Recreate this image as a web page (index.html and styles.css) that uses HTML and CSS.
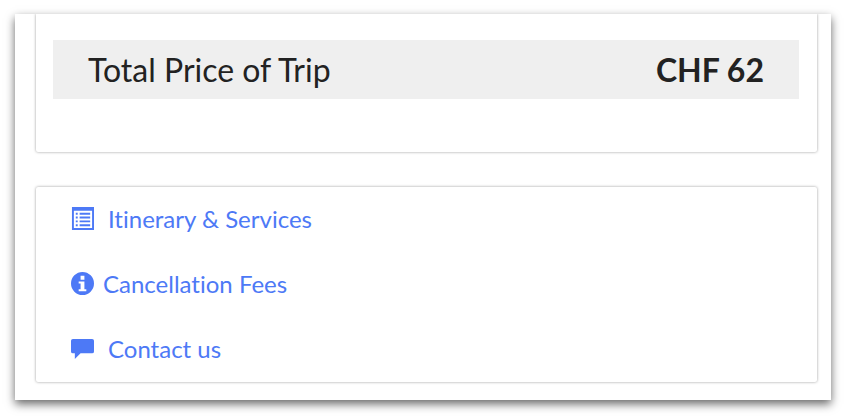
FILE: index.html
```
<!doctype html>
<html lang="en">
  <head>
    <meta charset="UTF-8" />
    <meta name="viewport" content="width=device-width, initial-scale=1.0" />
    <title>Trip Summary</title>
    <link rel="stylesheet" href="styles.css">
  </head>
  <body>
    <main class="panel">
      <section class="card price-card">
        <div class="total">
          <span>Total Price of Trip</span>
          <strong>CHF 62</strong>
        </div>
      </section>

      <nav class="card links">
        <a class="link" href="#itinerary">
          <svg class="icon" viewBox="0 0 24 24" aria-hidden="true">
            <path fill-rule="evenodd" d="M1 0h23v24H1zM3 4v18h19V4z" />
            <path d="M5 6h2v2H5zM5 10h2v2H5zM5 14h2v2H5zM5 18h2v2H5zM9 6h11v2H9zM9 10h11v2H9zM9 14h11v2H9zM9 18h11v2H9z" />
          </svg>
          <span>Itinerary &amp; Services</span>
        </a>
        <a class="link link-tight" href="#cancellation">
          <svg class="icon" viewBox="0 0 24 24" aria-hidden="true">
            <path fill-rule="evenodd" d="M12 0a12 12 0 1 1 0 24a12 12 0 0 1 0-24zM10 4v4h4V4zM8 10v2h2v6H8v2h8v-2h-2v-8z" />
          </svg>
          <span>Cancellation Fees</span>
        </a>
        <a class="link" href="#contact">
          <svg class="icon" viewBox="0 0 24 24" aria-hidden="true">
            <path d="M2 2h20q2 0 2 2v11q0 2-2 2H10l-6 6v-6H2q-2 0-2-2V4q0-2 2-2z" />
          </svg>
          <span>Contact us</span>
        </a>
      </nav>
    </main>
  </body>
</html>
```
FILE: styles.css
```
* {
  box-sizing: border-box;
}
body {
  margin: 0;
  padding: 14px 15px 16px;
  background: #fff;
  color: #222;
  font-family: Lato, "Open Sans", sans-serif;
  font-variant-ligatures: none;
}
.panel {
  padding: 0 14px 18px 21px;
  background: #fff;
  box-shadow: 0 4px 9px rgba(0, 0, 0, 0.6);
}
.card {
  background: #fff;
  border-radius: 2px;
  box-shadow: 0 0 3px rgba(0, 0, 0, 0.4);
}
.price-card {
  padding: 26px 18px 53px 17px;
  border-radius: 0 0 2px 2px;
  clip-path: inset(0 -4px -4px -4px);
}
.total {
  display: flex;
  align-items: center;
  justify-content: space-between;
  padding: 12px 35px;
  background: #efefef;
  font-size: 32px;
  line-height: 35px;
}
.links {
  display: flex;
  flex-direction: column;
  gap: 35px;
  margin-top: 35px;
  padding: 17px 35px 18px;
}
.link {
  display: flex;
  align-items: center;
  align-self: flex-start;
  gap: 14px;
  color: #4d79f6;
  font-size: 24px;
  line-height: 30px;
  text-decoration: none;
}
.link-tight {
  gap: 9px;
}
.link:hover {
  text-decoration: underline;
}
.icon {
  width: 23px;
  height: 23px;
  margin-bottom: 2px;
  fill: currentColor;
}
```
